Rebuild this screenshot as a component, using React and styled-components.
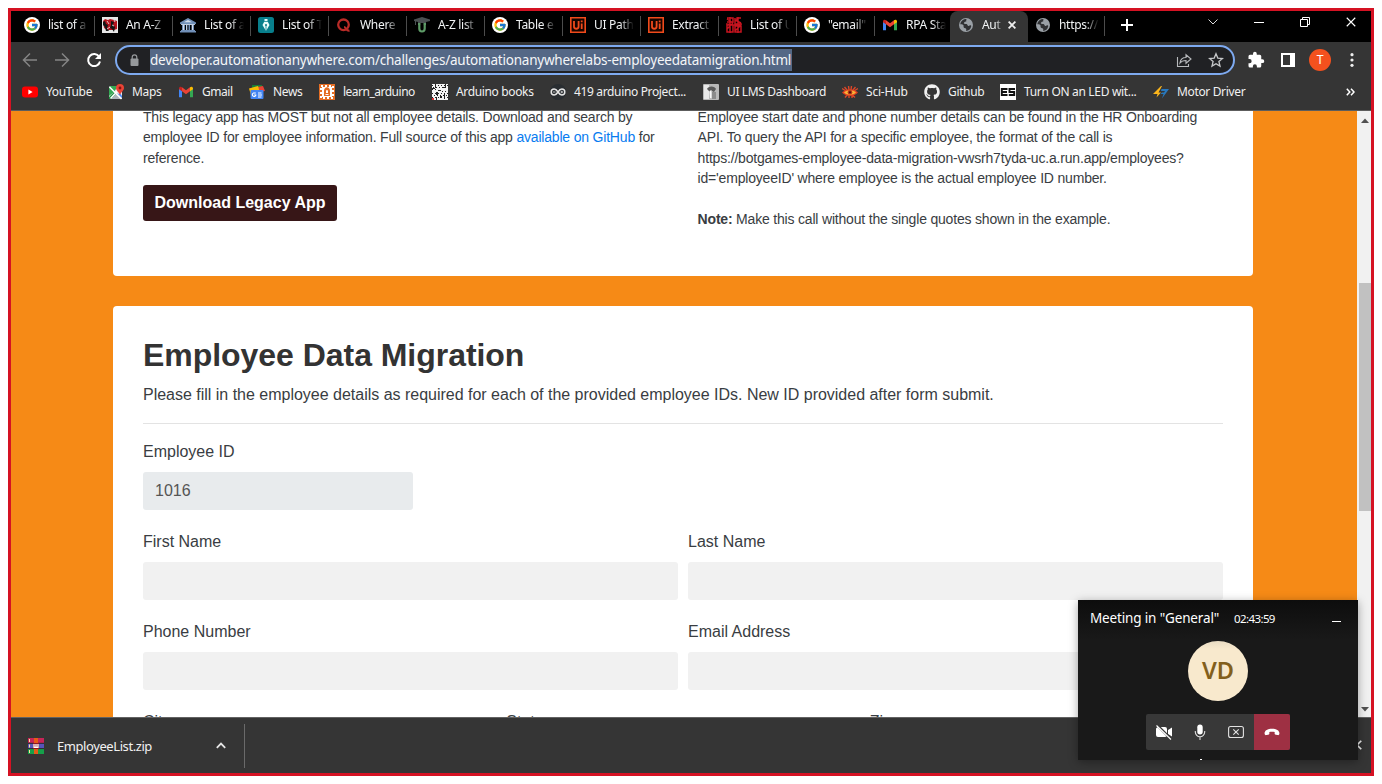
import React from "react";
import styled, { createGlobalStyle, css } from "styled-components";
import { FcGoogle } from "react-icons/fc";
import { FaGithub } from "react-icons/fa";

const GlobalStyle = createGlobalStyle`
  * { box-sizing: border-box; }
  body { margin: 0; background: #fff; overflow: hidden; }
  svg { display: block; flex: none; }
`;

const uiFont = css`
  font-family: "Noto Sans", "Open Sans", sans-serif;
`;

const Page = styled.div`
  width: 1382px;
  height: 784px;
  padding: 8px;
  background: #fff;
  position: relative;
`;

const Window = styled.div`
  width: 1366px;
  height: 768px;
  border: 3px solid #d51223;
  display: flex;
  flex-direction: column;
  overflow: hidden;
  background: #353535;
`;

/* ---------- tab strip ---------- */

const TabStrip = styled.div`
  height: 31px;
  flex: none;
  background: #000;
  display: flex;
  padding-left: 6px;
`;

const Tab = styled.div`
  width: ${(p) => p.$w || 78}px;
  height: 31px;
  flex: none;
  display: flex;
  align-items: center;
  padding: 0 6px 3px ${(p) => p.$pad || 7}px;
  position: relative;
  background: ${(p) => (p.$active ? "#353535" : "transparent")};
  border-radius: 8px 8px 0 0;
  &::after {
    content: "";
    display: ${(p) => (p.$divider ? "block" : "none")};
    position: absolute;
    right: 0;
    top: 5px;
    width: 1px;
    height: 20px;
    background: #4c4c4c;
  }
`;

const TabTitle = styled.span`
  ${uiFont}
  margin-left: 8px;
  width: ${(p) => p.$w || 40}px;
  flex: none;
  overflow: hidden;
  white-space: nowrap;
  font-size: 12px;
  line-height: 18px;
  letter-spacing: ${(p) => p.$ls || -0.3}px;
  color: #f1f3f4;
  mask-image: linear-gradient(to right, #000 65%, transparent 100%);
`;

const TabClose = styled.span`
  margin-left: 5px;
`;

const NewTab = styled.div`
  width: 48px;
  display: flex;
  align-items: center;
  padding: 0 0 3px 16px;
`;

const WindowControls = styled.div`
  margin-left: auto;
  width: 184px;
  display: flex;
  align-items: center;
  padding: 0 15px 9px 21px;
  justify-content: space-between;
`;

/* ---------- toolbar ---------- */

const Toolbar = styled.div`
  height: 36px;
  flex: none;
  display: flex;
  padding-left: 11px;
`;

const NavButtons = styled.div`
  width: 93px;
  display: flex;
  align-items: center;
  gap: 16px;
`;

const Omnibox = styled.div`
  width: 1120px;
  height: 30px;
  margin-top: 3px;
  border: 2px solid #7eaaf0;
  border-radius: 15px;
  background: #202124;
  display: flex;
  align-items: center;
  padding: 0 9px 0 12px;
`;

const Url = styled.span`
  ${uiFont}
  margin-left: 10px;
  width: 642px;
  height: 22px;
  line-height: 22px;
  font-size: 13.5px;
  letter-spacing: ${(p) => p.$ls}px;
  white-space: nowrap;
  background: #546886;
  color: #f4f6f8;
`;

const OmniActions = styled.div`
  margin-left: auto;
  display: flex;
  gap: 16px;
`;

const ToolbarActions = styled.div`
  display: flex;
  align-items: center;
  gap: 13px;
  padding-left: 12px;
`;

const Profile = styled.span`
  width: 22px;
  height: 22px;
  border-radius: 50%;
  background: #f4511e;
  color: #fff;
  font: 12px/22px Roboto, sans-serif;
  text-align: center;
`;

/* ---------- bookmarks ---------- */

const BookmarkBar = styled.div`
  height: 33px;
  flex: none;
  border-bottom: 1px solid #5d5d5d;
  display: flex;
  align-items: center;
  padding: 0 0 4px 11px;
`;

const Bookmark = styled.div`
  ${uiFont}
  width: ${(p) => p.$w}px;
  flex: none;
  display: flex;
  align-items: center;
  gap: 8px;
  font-size: 12px;
  line-height: 18px;
  letter-spacing: ${(p) => p.$ls}px;
  white-space: nowrap;
  color: #f1f1f1;
`;

/* ---------- web page ---------- */

const Viewport = styled.div`
  height: 606px;
  flex: none;
  display: flex;
  overflow: hidden;
  background: #f68a16;
  font-family: "Liberation Sans", Arial, sans-serif;
  color: #393d42;
`;

const Content = styled.main`
  width: 1346px;
  height: 606px;
  overflow: hidden;
  padding: 0 104px 0 102px;
`;

const Card = styled.section`
  background: #fff;
  border-radius: 4px;
  padding: 0 30px;
  width: 1140px;
`;

const InfoCard = styled(Card)`
  height: 169px;
  margin-top: -4px;
  display: flex;
`;

const InfoColumn = styled.div`
  width: ${(p) => p.$w}px;
  flex: none;
  font-size: 14px;
  line-height: 20.4px;
  letter-spacing: -0.19px;
  white-space: nowrap;
  p { margin: 0 0 20.4px; }
`;

const Link = styled.span`
  color: #087cf0;
`;

const DownloadButton = styled.button`
  display: block;
  width: 194px;
  height: 36px;
  margin-top: -4px;
  padding: 0;
  border: 0;
  border-radius: 3px;
  background: #371617;
  color: #fff;
  font: bold 16px/34px "Liberation Sans", Arial, sans-serif;
`;

const FormCard = styled(Card)`
  height: 700px;
  margin-top: 30px;
  padding-top: 30px;
`;

const Title = styled.h1`
  margin: 0;
  font-size: 32px;
  line-height: 38px;
  letter-spacing: ${(p) => p.$ls}px;
  color: #333;
`;

const Lead = styled.p`
  margin: 9px 0 0;
  font-size: 16px;
  line-height: 24px;
  letter-spacing: -0.01px;
`;

const Rule = styled.hr`
  margin: 16px 0 16px;
  border: 0;
  height: 1px;
  background: #e3e3e3;
`;

const FieldRow = styled.div`
  display: flex;
  gap: 10px;
  height: 90px;
`;

const Field = styled.label`
  width: ${(p) => p.$w || "auto"};
  flex: ${(p) => (p.$w ? "none" : "1")};
  display: flex;
  flex-direction: column;
  gap: 8px;
  font-size: 16px;
  line-height: 24px;
`;

const Input = styled.span`
  height: 38px;
  border-radius: 3px;
  padding: 7px 12px;
  background: ${(p) => (p.$readOnly ? "#e8ebed" : "#f1f1f1")};
  color: #555;
`;

const Scrollbar = styled.div`
  width: 14px;
  background: #f1f1f1;
  display: flex;
  flex-direction: column;
  align-items: center;
  padding: 7px 0 5px 2px;
`;

const Thumb = styled.div`
  width: 12px;
  height: 228px;
  margin-top: 160px;
  margin-bottom: auto;
  background: #c1c1c1;
`;

/* ---------- downloads ---------- */

const DownloadBar = styled.div`
  height: 56px;
  flex: none;
  border-top: 1px solid #626262;
  display: flex;
  align-items: center;
  padding: 0 0 0 17px;
`;

const DownloadItem = styled.div`
  ${uiFont}
  width: 217px;
  height: 44px;
  border-right: 1px solid #6a6a6a;
  display: flex;
  align-items: center;
  font-size: 13px;
  letter-spacing: ${(p) => p.$ls}px;
  color: #f1f1f1;
  span { width: 172px; padding-left: 13px; }
`;

const BarClose = styled.div`
  margin: 0 9px 2px auto;
`;

/* ---------- meeting window ---------- */

const Meeting = styled.aside`
  ${uiFont}
  position: absolute;
  left: 1078px;
  top: 600px;
  width: 280px;
  height: 160px;
  background: linear-gradient(#0d0d0d, #191919 40px);
  box-shadow: 0 2px 9px rgba(0, 0, 0, 0.35);
  color: #fff;
  display: flex;
  flex-direction: column;
  align-items: center;
`;

const MeetingHead = styled.div`
  align-self: stretch;
  height: 41px;
  display: flex;
  align-items: center;
  padding: 0 17px 5px 12px;
  white-space: nowrap;
`;

const MeetingTitle = styled.span`
  width: 144px;
  font-size: 13.5px;
  letter-spacing: ${(p) => p.$ls}px;
`;

const Timer = styled.span`
  font-size: 11.5px;
  letter-spacing: ${(p) => p.$ls}px;
`;

const Minimize = styled.span`
  width: 9px;
  height: 1px;
  margin: 7px 0 0 auto;
  background: #fff;
`;

const Avatar = styled.div`
  width: 60px;
  height: 60px;
  border-radius: 50%;
  background: linear-gradient(#e9dcc3, #f8e9cd 8px);
  color: #835f1c;
  font-size: 23.5px;
  font-weight: 600;
  line-height: 59px;
  text-align: center;
`;

const Controls = styled.div`
  width: 144px;
  height: 36px;
  margin-top: 13px;
  display: flex;
  border-radius: 2px;
  overflow: hidden;
  background: #383838;
`;

const Control = styled.div`
  width: 36px;
  display: flex;
  align-items: center;
  justify-content: center;
  background: ${(p) => (p.$end ? "#9e3043" : "transparent")};
`;

const Tick = styled.span`
  width: 2px;
  height: 1px;
  margin: 9px 34px 0 0;
  background: #fff;
`;

/* ---------- icons ---------- */

const Ico = ({ s = 16, children, ...rest }) => (
  <svg width={s} height={s} viewBox="0 0 16 16" fill="none" {...rest}>{children}</svg>
);

const Google = () => (
  <Ico>
    <circle cx="8" cy="8" r="8" fill="#fff" />
    <FcGoogle x="1.2" y="1.2" width="13.6" height="13.6" size="13.6" />
  </Ico>
);
const RedPhoto = () => (
  <Ico>
    <path fill="#e6e6e6" d="M0 0h16v16H0z" />
    <path fill="#b5121d" d="M1 4 3 2l3 1 2-1 4 1 3 1v8l-3 1H5l-3-2Z" />
    <path fill="#151515" d="M1 5l2-1 1 3 2 1-1 3 2 3H4l-1-4-2-2ZM9 4l3 1-1 3 2 2-1 5-2-3-2-1 1-3Z" />
    <path stroke="#eee" strokeWidth=".8" d="M5 4l2 3M10 8l2 1M5 12l3-2M12 3l1 2" />
  </Ico>
);
const Museum = () => (
  <Ico>
    <path fill="#7190b8" d="M0 5.500 8 1l8 4.500V7H0ZM1.500 7h13v1h-13zM2 8h3v5H2zM6 8h1.500v5H6zM8.500 8H10v5H8.500zM11.500 8h2.500v5h-2.500zM1 13h14v1H1zM0 14h16v1.500H0z" />
    <path fill="#d4deeb" d="M4 5.300 8 3l4 2.300ZM3 8h1v5H3zM6 8h.8v5H6zM12 8h1v5h-1zM1 7h14v.8H1z" />
  </Ico>
);
const PenNib = () => (
  <Ico>
    <rect width="16" height="16" rx="2.500" fill="#087f8c" />
    <path fill="#e9fbfa" d="M6.500 2h3v2h-3zM6.200 4.800h3.600L11.500 8 8 14 4.500 8Z" />
    <path stroke="#087f8c" strokeWidth=".8" d="M8 8v6" />
    <circle cx="8" cy="8" r="1" fill="#087f8c" />
  </Ico>
);
const QLogo = () => (
  <Ico>
    <circle cx="7.500" cy="7.800" r="5.300" stroke="#b92b27" strokeWidth="2.300" />
    <path stroke="#b92b27" strokeWidth="2.200" d="M8 10c2 0 2.300 4.300 5.500 3.600" />
  </Ico>
);
const Graduate = () => (
  <Ico>
    <path fill="#4b5052" d="M0 2.500 8 0l8 2.500V4L8 6 0 4Z" />
    <path stroke="#4b5052" d="M1.500 4v4M4 5.500h8" />
    <path stroke="#5e9b67" strokeWidth="2.200" d="M5.300 7v4.500c0 4 5.400 4 5.400 0V7M4 7h2.500M9.500 7H12" />
  </Ico>
);
const UiPath = () => (
  <Ico>
    <path fill="#160500" stroke="#f04a1b" strokeWidth="1.600" d="M.8.8h14.400v14.400H.8z" />
    <path stroke="#f04a1b" strokeWidth="1.800" d="M4 4v5.500c0 3 4.600 3 4.600 0V4M11.700 6.500V12M11.700 3.500v1.800" />
  </Ico>
);
const RedKnot = () => (
  <Ico>
    <path stroke="#c8141f" strokeWidth="1.500" d="M1 1h6v4H1M1 8h6v7H1zM9 1v6h6M15 1h-4v3M9 9h6v6H9zM4 0v16M12 0v16M0 7l8 1 8-1M1 12l6-6M9 14l6-6M1 2l6 4M9 3l6 3" />
  </Ico>
);
const Gmail = () => (
  <Ico>
    <path fill="#4285f4" d="M1 4v9.200h3V6.400Z" />
    <path fill="#34a853" d="M12 6.400v6.800h3V4Z" />
    <path fill="#c5221f" d="M1 4.500c0-2 2-2 3-1.200v4L1 5.200Z" />
    <path fill="#ea4335" d="m4 3.300 4 3 4-3v4L8 10.200 4 7.300Z" />
    <path fill="#fbbc04" d="M12 3.300c1-.8 3-.8 3 1.200v.7l-3 2.100Z" />
  </Ico>
);
const Globe = () => (
  <Ico>
    <circle cx="8" cy="8" r="7" fill="#9aa0a6" />
    <path fill="#303134" d="M9 2.200c-1 .2-1.200 1.300-.4 1.800-.9.8-2.200.4-2.500 1.700C5.200 7 7 6.800 8.400 6.900c1.200.1.8 1.800 2 2 .9.1 1.100-1 2.200-.7.7.2.7.9.5 1.500A5.800 5.800 0 0 1 8.200 14c-.2-1 .5-1.700-.3-2.400-.7-.6-2-.3-2.300-1.600-.2-.8.4-1.500-.4-2.100-.7-.6-2.100-.5-3-.6A5.800 5.800 0 0 1 9 2.200Z" />
  </Ico>
);
const CloseX = ({ s = 8, w = 1.8, c = "#eee" }) => (
  <svg width={s} height={s} viewBox="0 0 8 8"><path d="M.6.6l6.800 6.800M7.400.6.6 7.400" stroke={c} strokeWidth={w} /></svg>
);
const Plus = () => (
  <svg width="12" height="12" viewBox="0 0 12 12"><path d="M6 0v12M0 6h12" stroke="#fff" strokeWidth="2" /></svg>
);
const Youtube = () => (
  <Ico><rect y="2.400" width="16" height="11.200" rx="3" fill="#f00" /><path fill="#fff" d="m6.400 5.600 4.200 2.400-4.200 2.400Z" /></Ico>
);
const Maps = () => (
  <Ico>
    <rect x="1" y="2" width="13" height="13" rx="1.500" fill="#e8eaed" />
    <path fill="#34a853" d="M1 3.500 2.500 2H10L6 8 1 12Z" />
    <path fill="#aeb4bb" d="M6 11l3-2 5 5-1 1H3Z" />
    <path fill="#4285f4" d="M10 10l2-1 2 3v2Z" />
    <path fill="#1e8e3e" d="M1 13l5-5 2 2-5 5H1Z" />
    <path stroke="#fff" strokeWidth="1.500" d="M1.500 3l12 12M2.500 14.500 9 7.500" />
    <path fill="#ea4335" d="M12 0a4 4 0 0 1 4 4c0 2.700-3 4-4 7-1-3-4-4.300-4-7a4 4 0 0 1 4-4Z" />
    <circle cx="12" cy="4" r="1.400" fill="#811411" />
  </Ico>
);
const News = () => (
  <Ico>
    <path fill="#188038" d="M3 1h10v6H3z" /><path fill="#ea4335" d="m8 3 6-1 2 5-6 1Z" /><path fill="#fbbc04" d="m0 4.500 9-2.500 2 7-9 2Z" />
    <rect x="1.500" y="6" width="13" height="9" rx="1" fill="#4285f4" />
    <path stroke="#fff" strokeWidth="1.100" d="M6.800 9H4.500a1.800 1.800 0 1 0 2.300 2.400V11H5.200M9 9h3.500M9 11h4M9 13h3.500" />
  </Ico>
);
const Learn = () => (
  <Ico>
    <path fill="#e46e25" d="M0 0h16v16H0z" />
    <path stroke="#fff" strokeWidth="2" strokeDasharray="2 2" d="M2 2h12v12H2z" />
    <path fill="#fff" d="M3 3h10v10H3z" />
    <path fill="#e46e25" d="M5 12V7c0-5 6-5 6 0v5Z" />
    <path fill="#fff" d="M7 7.500c0-2 2-2 2 0V9H7zM6.500 10h3v1h-3z" />
  </Ico>
);
const PixelGrid = () => (
  <Ico>
    <path fill="#f4f4f4" d="M0 0h16v16H0z" />
    <path stroke="#222" strokeWidth="1" strokeDasharray="1 2" d="M0 1.500h16M1 3.500h15M0 5.500h6M10 7.500h6M0 9.500h16M2 11.500h14M0 13.500h16" />
    <path fill="#222" d="M3 0h1v4H3zM0 4h3v1H0zM6 6h3v1H6zM11 3h2v1h-2zM4 8h2v3H4zM12 10h1v5h-1zM8 12h2v2H8zM13 0h1v3h-1zM4 13h1v3H4z" />
    <path fill="#d33" d="M0 14h2v2H0z" />
  </Ico>
);
const InfinityMark = () => (
  <Ico>
    <circle cx="8" cy="8" r="8" fill="#292d31" />
    <path stroke="#e5e5e5" strokeWidth="1.500" d="M8 8C6.500 5.700 5.400 5 4.200 5a3 3 0 0 0 0 6C5.400 11 6.500 10.300 8 8s2.600-3 3.800-3a3 3 0 0 1 0 6C10.600 11 9.500 10.300 8 8Z" />
    <path stroke="#e5e5e5" strokeWidth=".8" d="M3 8h2.400M10.600 8H13M11.800 6.800v2.400" />
  </Ico>
);
const Portrait = () => (
  <Ico>
    <rect width="16" height="16" rx="1" fill="#b9b9b9" />
    <path fill="#e9e9e9" d="M1 1h5v14H1z" />
    <path fill="#5a5a5a" d="M4 5c1-3.500 8-3.500 9 0l-2 3-2-1-2 1Z" />
    <path fill="#fafafa" d="M6.500 7l2-1v8H7Z" />
    <path fill="#8b8b8b" d="M9 8h4v7H9z" />
  </Ico>
);
const Raven = () => (
  <Ico>
    <path stroke="#d9482a" strokeWidth="1.400" d="M2.500 3l2.500 3M6.500 2l.5 4M9.500 2 9 6M13.500 3 11 6M0 4.500l4 2.500M16 4.500l-4 2.500M3 13.500l2.500-3M7 14v-3M10 14v-3M13 13.500l-3-3" />
    <path fill="#e43d20" d="M0 8.500c4-4.500 12-4.500 16 0-4 4.500-12 4.500-16 0Z" />
    <path fill="#f8b335" d="M2 8.500c3-3 9-3 12 0-3 3-9 3-12 0Z" />
    <circle cx="8" cy="8.300" r="2.300" fill="#b5341a" /><circle cx="8" cy="8.300" r="1.100" fill="#3b120c" />
  </Ico>
);
const EsMark = () => (
  <Ico>
    <path fill="#fff" d="M0 0h16v16H0z" />
    <path stroke="#111" strokeWidth="1.900" d="M7.500 5H1.800v6h5.700M2 8h5M15 5H9.500v3h4.700v3H8.800" />
  </Ico>
);
const Bolt = () => (
  <Ico>
    <path fill="#fbb51b" d="M8 2 0 10h4.500L3.500 13.500 8 8.500H5.500L9 2Z" />
    <path fill="#2878bd" d="M8.500 5H16L9 14.500l1.500-4.500H7.500L9 8.500h2L12 7H8Z" />
  </Ico>
);
const Archive = () => (
  <Ico>
    <path fill="#c72557" d="M0 0h16v5H0z" /><path fill="#5853b9" d="M0 5.500h16v5H0z" /><path fill="#16a04a" d="M0 11h16v5H0z" />
    <path stroke="#252525" strokeWidth=".8" d="M0 5.300h16M0 10.600h16" />
    <path fill="#e65b17" d="M6 0h4v16H6z" />
    <path fill="#ffe0a0" d="M1 1h1v3H1zM1 6.500h1v3H1zM1 12h1v3H1z" />
    <rect x="5" y="5" width="6" height="6" fill="#8d1626" /><path stroke="#fff" strokeWidth="1.300" d="M6 6v3.300h4V6M8 6v3" />
  </Ico>
);

const tabs = [
  ["list of a", Google], ["An A-Z", RedPhoto], ["List of a", Museum], ["List of T", PenNib],
  ["Where", QLogo], ["A-Z list", Graduate], ["Table e", Google], ["UI Path", UiPath],
  ["Extract", UiPath], ["List of U", RedKnot], ["\"email\"", Google], ["RPA Sta", Gmail],
];

const bookmarks = [
  ["YouTube", Youtube, 86, -0.35], ["Maps", Maps, 70, -0.35], ["Gmail", Gmail, 71, -0.45],
  ["News", News, 70, -0.35], ["learn_arduino", Learn, 113, -0.5], ["Arduino books", PixelGrid, 118, -0.35],
  ["419 arduino Project...", InfinityMark, 153, -0.35], ["UI LMS Dashboard", Portrait, 139, -0.37],
  ["Sci-Hub", Raven, 82, -0.2], ["Github", FaGithub, 76, -0.35],
  ["Turn ON an LED wit...", EsMark, 153, -0.32], ["Motor Driver", Bolt, 193, -0.35],
];

export default function App() {
  return (
    <Page>
      <GlobalStyle />
      <Window>
        <TabStrip>
          {tabs.map(([name, Icon], i) => (
            <Tab key={i} $divider={i < 11} $w={i === 11 ? 75 : 78}><Icon /><TabTitle>{name}</TabTitle></Tab>
          ))}
          <Tab $active $pad={8}><Globe /><TabTitle $w={21}>Aut</TabTitle><TabClose><CloseX /></TabClose></Tab>
          <Tab $divider $w={77}><Globe /><TabTitle>https://</TabTitle></Tab>
          <NewTab><Plus /></NewTab>
          <WindowControls>
            <svg width="10" height="6" viewBox="0 0 10 6"><path d="m.5.5 4.500 4.500L9.500.5" stroke="#ddd" fill="none" /></svg>
            <svg width="10" height="10" viewBox="0 0 10 10"><path d="M0 5.500h10" stroke="#fff" /></svg>
            <svg width="10" height="10" viewBox="0 0 10 10"><path d="M.5 2.500h7v7h-7zM2.500 2.500v-2h7v7h-2" stroke="#fff" fill="none" /></svg>
            <CloseX s={10} w={0.9} c="#fff" />
          </WindowControls>
        </TabStrip>

        <Toolbar>
          <NavButtons>
            <Ico><path d="M15 8H2M8 1.500 1.500 8 8 14.500" stroke="#858585" strokeWidth="1.500" /></Ico>
            <Ico><path d="M1 8h13M8 1.500 14.500 8 8 14.500" stroke="#858585" strokeWidth="1.500" /></Ico>
            <Ico><path d="M13.200 4.800A6 6 0 1 0 14 9.500" stroke="#fff" strokeWidth="2" /><path d="M15 1v6H9Z" fill="#fff" /></Ico>
          </NavButtons>
          <Omnibox>
            <svg width="11" height="13" viewBox="0 0 11 13"><rect x="1.500" y="4.500" width="8" height="7.500" rx="1" fill="#96999c" /><path d="M3.200 5V3.200a2.300 2.300 0 0 1 4.600 0V5" stroke="#96999c" strokeWidth="1.200" fill="none" /></svg>
            <Url $ls={-0.22}>developer.automationanywhere.com/challenges/automationanywherelabs-employeedatamigration.html</Url>
            <OmniActions>
              <Ico><path d="M1.500 5v9.500h11V12M4 11c.5-4 3-5.500 6-5.500V2.800L15 7l-5 4.200V8.500C7.500 8.500 5.500 9 4 11Z" stroke="#b8babd" strokeWidth="1.100" /></Ico>
              <Ico><path d="m8 1.800 1.800 4.300 4.700.4-3.600 3 1.100 4.600L8 11.700l-4 2.400 1.100-4.600-3.600-3 4.700-.4Z" stroke="#c6c8ca" strokeWidth="1.300" /></Ico>
            </OmniActions>
          </Omnibox>
          <ToolbarActions>
            <svg width="18" height="18" viewBox="0 0 24 24" fill="#fff"><path d="M20.500 11H19V7a2 2 0 0 0-2-2h-4V3.500a2.500 2.500 0 0 0-5 0V5H4a2 2 0 0 0-2 2v3.800h1.500a2.700 2.700 0 0 1 0 5.400H2V20a2 2 0 0 0 2 2h3.800v-1.500a2.700 2.700 0 0 1 5.400 0V22H17a2 2 0 0 0 2-2v-4h1.500a2.500 2.500 0 0 0 0-5Z" /></svg>
            <svg width="18" height="14" viewBox="-3 0 18 14"><path d="M1 1h12v12H1z" fill="none" stroke="#fff" strokeWidth="2" /><path d="M9 1h4v12H9z" fill="#fff" /></svg>
            <Profile>T</Profile>
            <svg width="16" height="16" viewBox="0 0 16 16" fill="#eee"><circle cx="8" cy="2.700" r="1.600" /><circle cx="8" cy="8" r="1.600" /><circle cx="8" cy="13.300" r="1.600" /></svg>
          </ToolbarActions>
        </Toolbar>

        <BookmarkBar>
          {bookmarks.map(([name, Icon, w, ls]) => (
            <Bookmark key={name} $w={w} $ls={ls}><Icon size={16} />{name}</Bookmark>
          ))}
          <svg width="9" height="8" viewBox="0 0 9 8"><path d="m.8.8 3 3.200-3 3.200M5 .8 8 4 5 7.200" stroke="#fff" strokeWidth="1.500" fill="none" /></svg>
        </BookmarkBar>

        <Viewport>
          <Content>
            <InfoCard>
              <InfoColumn $w={554.6}>
                <p>
                  This legacy app has MOST but not all employee details. Download and search by<br />
                  employee ID for employee information. Full source of this app <Link>available on GitHub</Link> for<br />
                  reference.
                </p>
                <DownloadButton>Download Legacy App</DownloadButton>
              </InfoColumn>
              <InfoColumn $w={525}>
                <p>
                  Employee start date and phone number details can be found in the HR Onboarding<br />
                  API. To query the API for a specific employee, the format of the call is<br />
                  https://botgames-employee-data-migration-vwsrh7tyda-uc.a.run.app/employees?<br />
                  id='employeeID' where employee is the actual employee ID number.
                </p>
                <p><b>Note:</b> Make this call without the single quotes shown in the example.</p>
              </InfoColumn>
            </InfoCard>

            <FormCard>
              <Title $ls={-0.04}>Employee Data Migration</Title>
              <Lead>Please fill in the employee details as required for each of the provided employee IDs. New ID provided after form submit.</Lead>
              <Rule />
              <FieldRow><Field $w="270px">Employee ID<Input $readOnly>1016</Input></Field></FieldRow>
              <FieldRow><Field>First Name<Input /></Field><Field>Last Name<Input /></Field></FieldRow>
              <FieldRow><Field>Phone Number<Input /></Field><Field>Email Address<Input /></Field></FieldRow>
              <FieldRow><Field>City<Input /></Field><Field>State<Input /></Field><Field>Zip<Input /></Field></FieldRow>
            </FormCard>
          </Content>
          <Scrollbar>
            <svg width="8" height="5" viewBox="0 0 8 5"><path d="M0 5 4 .5 8 5Z" fill="#505050" /></svg>
            <Thumb />
            <svg width="8" height="5" viewBox="0 0 8 5"><path d="m0 0 4 4.500L8 0Z" fill="#505050" /></svg>
          </Scrollbar>
        </Viewport>

        <DownloadBar>
          <DownloadItem $ls={-0.42}>
            <Archive />
            <span>EmployeeList.zip</span>
            <svg width="10" height="7" viewBox="0 0 10 7"><path d="m.8 5.800 4.200-4.200 4.200 4.200" stroke="#e6e6e6" strokeWidth="1.800" fill="none" /></svg>
          </DownloadItem>
          <BarClose><CloseX s={10} w={1.4} /></BarClose>
        </DownloadBar>
      </Window>

      <Meeting>
        <MeetingHead>
          <MeetingTitle $ls={-0.15}>Meeting in "General"</MeetingTitle>
          <Timer $ls={-0.6}>02:43:59</Timer>
          <Minimize />
        </MeetingHead>
        <Avatar>VD</Avatar>
        <Controls>
          <Control><Ico><path fill="#fff" d="M1.500 3H9a2 2 0 0 1 2 2v6a2 2 0 0 1-2 2H2a2 2 0 0 1-2-2V4.500ZM12 6l4-2.500v9L12 10Z" /><path d="M.5.5l15 15" stroke="#383838" strokeWidth="2.600" /><path d="M.5 1.500l14.500 14" stroke="#fff" strokeWidth="1.100" /></Ico></Control>
          <Control><Ico><rect x="5.300" y=".5" width="5.400" height="10" rx="2.700" fill="#fff" /><path d="M3.300 7v1a4.700 4.700 0 0 0 9.400 0V7M8 12.700V16" stroke="#ddd" strokeWidth="1.100" /></Ico></Control>
          <Control><Ico><rect x=".6" y="2.500" width="14.800" height="11" rx="2" stroke="#e2e2e2" strokeWidth="1.100" /><path d="m5.300 5.300 5.400 5.400m0-5.400-5.400 5.400" stroke="#e2e2e2" strokeWidth="1.100" /></Ico></Control>
          <Control $end><Ico><path fill="#fff" d="M.6 9.800C.3 6.500 3.500 4.700 8 4.700s7.700 1.800 7.400 5.100c-.1 1-.8 1.500-1.700 1.300l-1.900-.4c-.9-.2-1.200-.7-1.200-1.500l.1-1.200c-1.500-.5-3.900-.5-5.400 0l.1 1.200c0 .8-.3 1.300-1.200 1.500l-1.900.4C1.400 11.300.7 10.800.6 9.800Z" /></Ico></Control>
        </Controls>
        <Tick />
      </Meeting>
    </Page>
  );
}
